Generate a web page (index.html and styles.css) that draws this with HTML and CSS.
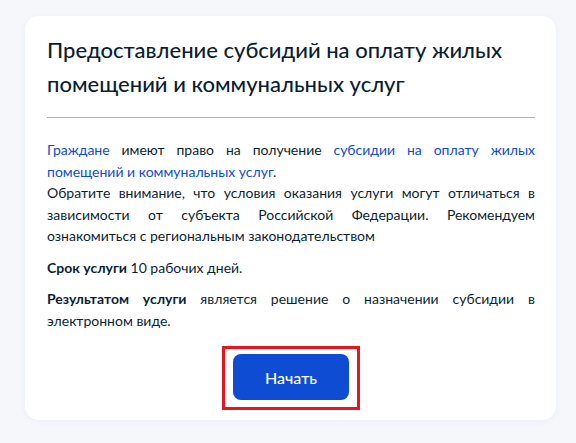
FILE: index.html
```html
<!DOCTYPE html>
<html lang="ru">
<head>
    <meta charset="UTF-8">
    <meta name="viewport" content="width=device-width, initial-scale=1.0">
    <title>Субсидии</title>
    <link rel="stylesheet" href="styles.css">
</head>
<body>

    <div class="service-card">
        <h1 class="title">Предоставление субсидий на оплату жилых помещений и коммунальных услуг</h1>
        <div class="divider"></div>
        <div class="text-block">
            <p class="line-par"><a href="#">Граждане</a> имеют право на получение <a href="#">субсидии на оплату жилых помещений и коммунальных услуг</a>.</p>
            <p class="line-par">Обратите внимание, что условия оказания услуги могут отличаться в зависимости от субъекта Российской Федерации. Рекомендуем ознакомиться с региональным законодательством</p>
        </div>
        <p class="text"><b>Срок услуги</b> 10 рабочих дней.</p>
        <p class="text"><b>Результатом услуги</b> является решение о назначении субсидии в электронном виде.</p>
        <div class="actions">
            <div class="highlight">
                <button class="btn">Начать</button>
            </div>
        </div>
    </div>

</body>
</html>
```

FILE: styles.css
```css
body {
    margin: 0;
    padding: 16px 20px 22px 25px;
    font-family: Lato, "Noto Sans", sans-serif;
    background-color: #f5f7fb;
    color: #0b1f33;
}
.service-card {
    width: 531px;
    box-sizing: border-box;
    background: white;
    border-radius: 14px;
    box-shadow: 0 1px 6px rgba(40, 80, 160, 0.06);
    padding: 17px 21px 10px 22px;
}
.title {
    margin: 0;
    font-size: 22px;
    line-height: 34px;
    font-weight: 500;
}
.divider {
    height: 1px;
    background-color: #9fb1dc;
    margin: 16px 0 21px;
}
.text-block {
    margin-bottom: 10px;
}
.line-par,
.text {
    margin: 0;
    font-size: 14px;
    line-height: 21.5px;
    text-align: justify;
}
.text {
    margin-bottom: 10px;
}
.text b {
    font-weight: 700;
}
a {
    color: #0d4cd3;
    text-decoration: none;
}
.actions {
    display: flex;
    justify-content: center;
    margin-top: 15px;
}
.highlight {
    border: 3px solid #e4161f;
    padding: 5px 8px 7px;
}
.btn {
    display: block;
    width: 116px;
    height: 46px;
    background-color: #0d4cd3;
    color: white;
    border: none;
    border-radius: 8px;
    font-family: Lato, "Noto Sans", sans-serif;
    font-size: 16px;
    font-weight: 500;
    cursor: pointer;
}
```
